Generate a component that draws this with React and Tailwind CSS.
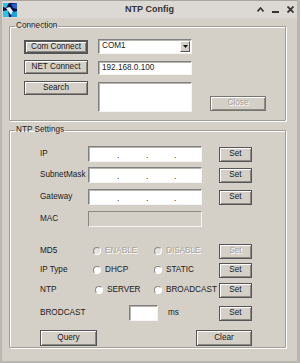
import React from 'react';

const btn =
  'flex items-center justify-center bg-[#d4d0c8] border border-[#555] shadow-[inset_1px_1px_0_#fff,inset_-1px_-1px_0_#8c8982] text-[#1a1a1a] leading-none';
const field =
  'bg-white border border-[#808080] border-r-[#f4f4f4] border-b-[#f4f4f4] shadow-[inset_1px_1px_0_#b8b5ae]';
const group =
  'border border-[#a19e96] shadow-[inset_1px_1px_0_#fff,1px_1px_0_#fff] rounded-[1px]';

const Radio = ({ label, disabled }) => (
  <div className="flex items-center">
    <span
      className={`w-[8px] h-[8px] rounded-full border border-[#8c8982] border-r-[#fff] border-b-[#fff] ${
        disabled ? 'bg-[#e4e2dd]' : 'bg-white'
      }`}
    />
    <span
      className={`ml-[4px] leading-none ${
        disabled ? 'text-[#a8a59e] [text-shadow:1px_1px_0_#fff]' : 'text-[#1a1a1a]'
      }`}
    >
      {label}
    </span>
  </div>
);

const IpField = () => (
  <div className={`${field} w-[114px] h-[16px] flex items-end pb-[1px] text-[#1a1a1a]`}>
    <span className="w-[28px]" />
    <span className="w-[29px] leading-none">.</span>
    <span className="w-[28px] leading-none">.</span>
    <span className="leading-none">.</span>
  </div>
);

const SetBtn = ({ disabled }) => (
  <button
    className={`${btn} w-[33px] h-[15px] ${
      disabled ? 'text-[#a8a59e] border-[#8c8982] [text-shadow:1px_1px_0_#fff]' : ''
    }`}
  >
    Set
  </button>
);

const Row = ({ label, children, className = '' }) => (
  <div className={`flex items-center h-[16px] ${className}`}>
    <span className="w-[48px] leading-none text-[#1a1a1a]">{label}</span>
    {children}
  </div>
);

const AppIcon = () => (
  <svg width="14" height="14" viewBox="0 0 14 14">
    <rect x="0" y="0" width="14" height="14" fill="#0a0a3c" />
    <polygon points="0,0 6,0 3,5 0,4" fill="#26c6e8" />
    <polygon points="0,8 5,7 6,14 0,14" fill="#26c6e8" />
    <polygon points="8,1 14,0 14,6 10,5" fill="#2a5fd0" />
    <polygon points="3,5 7,4 11,10 8,12" fill="#e8f4ff" />
    <polygon points="9,9 14,8 14,14 8,14" fill="#1fa0d8" />
  </svg>
);

export default function App() {
  return (
    <div className="w-[300px] h-[363px] bg-[#d4d0c8] font-['Liberation_Sans',Arial,sans-serif] text-[8.2px] flex flex-col border-l-2 border-r-[3px] border-b-[2px] border-[#b9b6af] overflow-hidden">
      {/* title bar */}
      <div className="relative h-[18px] flex items-center bg-[#dcd9d4] border-t border-[#a8a59f]">
        <div className="ml-[1px]">
          <AppIcon />
        </div>
        <div className="absolute inset-x-0 text-center font-bold text-[9px] text-[#333] leading-none">
          NTP Config
        </div>
        <div className="ml-auto mr-[3px] flex items-center gap-[8px] text-[#333] font-bold leading-none">
          <svg width="7" height="5" viewBox="0 0 7 5">
            <path d="M0.5 4.5 L3.5 1 L6.5 4.5" stroke="#333" strokeWidth="1.6" fill="none" />
          </svg>
          <svg width="7" height="7" viewBox="0 0 7 7">
            <rect x="0" y="5" width="7" height="2" fill="#333" />
          </svg>
          <svg width="7" height="7" viewBox="0 0 7 7">
            <path d="M0.5 0.5 L6.5 6.5 M6.5 0.5 L0.5 6.5" stroke="#333" strokeWidth="1.8" />
          </svg>
        </div>
      </div>

      <div className="px-[7px]">
        {/* Connection */}
        <fieldset className={`${group} mt-[3px] w-[277px] pt-[8px] pb-[8px]`}>
          <legend className="ml-[5px] px-[1px] leading-[10px] text-[#1a1a1a]">Connection</legend>
          <div className="flex pl-[14px]">
            <div className="flex flex-col w-[64px]">
              <button className={`${btn} h-[14px] mt-[1px] border-2 border-[#333]`}>Com Connect</button>
              <button className={`${btn} h-[14px] mt-[6px]`}>NET Connect</button>
              <button className={`${btn} h-[14px] mt-[7px]`}>Search</button>
            </div>
            <div className="flex flex-col w-[94px] ml-[10px]">
              <div className={`${field} h-[15px] flex items-center pl-[3px] text-[#1a1a1a]`}>
                <span className="leading-none">COM1</span>
                <span className="ml-auto mr-[1px] w-[10px] h-[11px] bg-[#d4d0c8] border border-[#fff] border-r-[#555] border-b-[#555] flex items-center justify-center">
                  <svg width="5" height="3" viewBox="0 0 5 3">
                    <path d="M0 0 H5 L2.5 3 Z" fill="#111" />
                  </svg>
                </span>
              </div>
              <div className={`${field} h-[14px] mt-[7px] flex items-center pl-[3px] text-[#1a1a1a]`}>
                <span className="leading-none">192.168.0.100</span>
              </div>
              <div className={`${field} h-[30px] mt-[7px]`} />
            </div>
            <div className="ml-[18px]">
              <button
                className={`${btn} w-[56px] h-[15px] mt-[57px] border-[#77746d] text-[#a8a59e] [text-shadow:1px_1px_0_#fff]`}
              >
                Close
              </button>
            </div>
          </div>
        </fieldset>

        {/* NTP Settings */}
        <fieldset className={`${group} mt-[4px] w-[277px] pt-[11px] pb-[1px]`}>
          <legend className="ml-[5px] px-[1px] leading-[10px] text-[#1a1a1a]">NTP Settings</legend>
          <div className="flex flex-col pl-[30px]">
            <Row label="IP">
              <IpField />
              <div className="ml-[17px]"><SetBtn /></div>
            </Row>
            <Row label="SubnetMask" className="mt-[5px]">
              <IpField />
              <div className="ml-[17px]"><SetBtn /></div>
            </Row>
            <Row label="Gateway" className="mt-[6px]">
              <IpField />
              <div className="ml-[17px]"><SetBtn /></div>
            </Row>
            <Row label="MAC" className="mt-[6px]">
              <div className="w-[114px] h-[16px] bg-[#d4d0c8] border border-[#8c8982] border-r-[#f4f4f4] border-b-[#f4f4f4]" />
            </Row>
            <Row label="MD5" className="mt-[16px]">
              <div className="w-[66px] pl-[5px]"><Radio label="ENABLE" disabled /></div>
              <div className="w-[65px]"><Radio label="DISABLE" disabled /></div>
              <SetBtn disabled />
            </Row>
            <Row label="IP Type" className="mt-[3px]">
              <div className="w-[66px] pl-[5px]"><Radio label="DHCP" /></div>
              <div className="w-[65px]"><Radio label="STATIC" /></div>
              <SetBtn />
            </Row>
            <Row label="NTP" className="mt-[4px]">
              <div className="w-[66px] pl-[7px]"><Radio label="SERVER" /></div>
              <div className="w-[65px]"><Radio label="BROADCAST" /></div>
              <SetBtn />
            </Row>
            <Row label="BRODCAST" className="mt-[7px]">
              <div className={`${field} ml-[41px] w-[29px] h-[16px]`} />
              <span className="ml-[10px] leading-none text-[#1a1a1a]">ms</span>
              <div className="ml-[40px]"><SetBtn /></div>
            </Row>
            <div className="flex h-[16px] mt-[9px]">
              <button className={`${btn} w-[57px] h-[16px]`}>Query</button>
              <button className={`${btn} w-[56px] h-[16px] ml-[99px]`}>Clear</button>
            </div>
          </div>
        </fieldset>
      </div>
    </div>
  );
}
